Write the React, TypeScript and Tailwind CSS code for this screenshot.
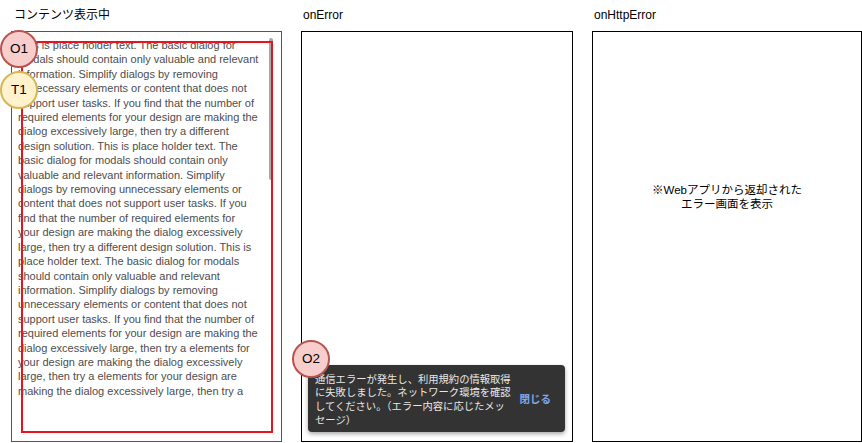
// App.tsx — three phone-ish frames: content view, onError snackbar, onHttpError
const bodyLines = [
  "This is place holder text. The basic dialog for",
  "modals should contain only valuable and relevant",
  "information. Simplify dialogs by removing",
  "unnecessary elements or content that does not",
  "support user tasks. If you find that the number of",
  "required elements for your design are making the",
  "dialog excessively large, then try a different",
  "design solution. This is place holder text. The",
  "basic dialog for modals should contain only",
  "valuable and relevant information. Simplify",
  "dialogs by removing unnecessary elements or",
  "content that does not support user tasks. If you",
  "find that the number of required elements for",
  "your design are making the dialog excessively",
  "large, then try a different design solution. This is",
  "place holder text. The basic dialog for modals",
  "should contain only valuable and relevant",
  "information. Simplify dialogs by removing",
  "unnecessary elements or content that does not",
  "support user tasks. If you find that the number of",
  "required elements for your design are making the",
  "dialog excessively large, then try a elements for",
  "your design are making the dialog excessively",
  "large, then try a elements for your design are",
  "making the dialog excessively large, then try a",
];

const font = "font-['Liberation_Sans','Noto_Sans_CJK_JP',sans-serif]";

function Marker({ label, tone, className }: { label: string; tone: "red" | "yellow"; className: string }) {
  const colors =
    tone === "red"
      ? "bg-[#f8cecc] border-[#b85450]"
      : "bg-[#fff2cc] border-[#d6b656]";
  return (
    <div
      className={`absolute flex h-[38px] w-[38px] items-center justify-center rounded-full border-2 text-[13.5px] text-black ${colors} ${className}`}
    >
      {label}
    </div>
  );
}

export default function App() {
  return (
    <div className={`relative h-[443px] w-[862px] bg-white ${font}`}>
      <div className="flex gap-[19px] pl-[11px]">
        {/* コンテンツ表示中 */}
        <div className="flex w-[271px] flex-col">
          <div className="h-[31px] pl-[3px] pt-[7px] text-[12px] leading-[16px] text-black">
            コンテンツ表示中
          </div>
          <div className="relative h-[411px] overflow-hidden border border-[#555]">
            <div className="pl-[6px] pt-[6px] text-[11px] leading-[14.4px] text-[#4d4d4d]">
              {bodyLines.map((line, i) => (
                <div key={i} className="whitespace-nowrap">
                  {line}
                </div>
              ))}
            </div>
            {/* scroll thumb */}
            <div className="absolute right-[8px] top-[6px] h-[142px] w-[4px] rounded-full bg-[#a8a8a8]" />
            {/* highlight frame */}
            <div className="absolute left-[9px] top-[9px] h-[392px] w-[252px] border-2 border-[#e8141b]" />
          </div>
        </div>

        {/* onError */}
        <div className="flex w-[272px] flex-col">
          <div className="h-[31px] pl-[2px] pt-[7px] text-[12px] leading-[16px] text-black">
            onError
          </div>
          <div className="flex h-[411px] flex-col justify-end border border-black px-[6px] pb-[9px] pr-[7px]">
            <div className="flex h-[67px] items-center rounded-[4px] bg-[#333] pl-[7px] pr-[14px] pt-[3px] shadow-[0_2px_4px_rgba(0,0,0,0.35)]">
              <p className="w-[198px] text-[10.3px] leading-[13.6px] text-[#e8e8e8]">
                通信エラーが発生し、利用規約の情報取得に失敗しました。ネットワーク環境を確認してください。（エラー内容に応じたメッセージ）
              </p>
              <span className="ml-auto text-[10.5px] font-bold text-[#7fa6ee]">閉じる</span>
            </div>
          </div>
        </div>

        {/* onHttpError */}
        <div className="flex w-[270px] flex-col">
          <div className="h-[31px] pl-[2px] pt-[7px] text-[12px] leading-[16px] text-black">
            onHttpError
          </div>
          <div className="h-[411px] border border-black pt-[151px] text-center text-[11.5px] leading-[14px] text-black">
            <p>※Webアプリから返却された</p>
            <p>エラー画面を表示</p>
          </div>
        </div>
      </div>

      <Marker label="O1" tone="red" className="left-0 top-[30px]" />
      <Marker label="T1" tone="yellow" className="left-0 top-[71px]" />
      <Marker label="O2" tone="red" className="left-[292px] top-[340px]" />
    </div>
  );
}
